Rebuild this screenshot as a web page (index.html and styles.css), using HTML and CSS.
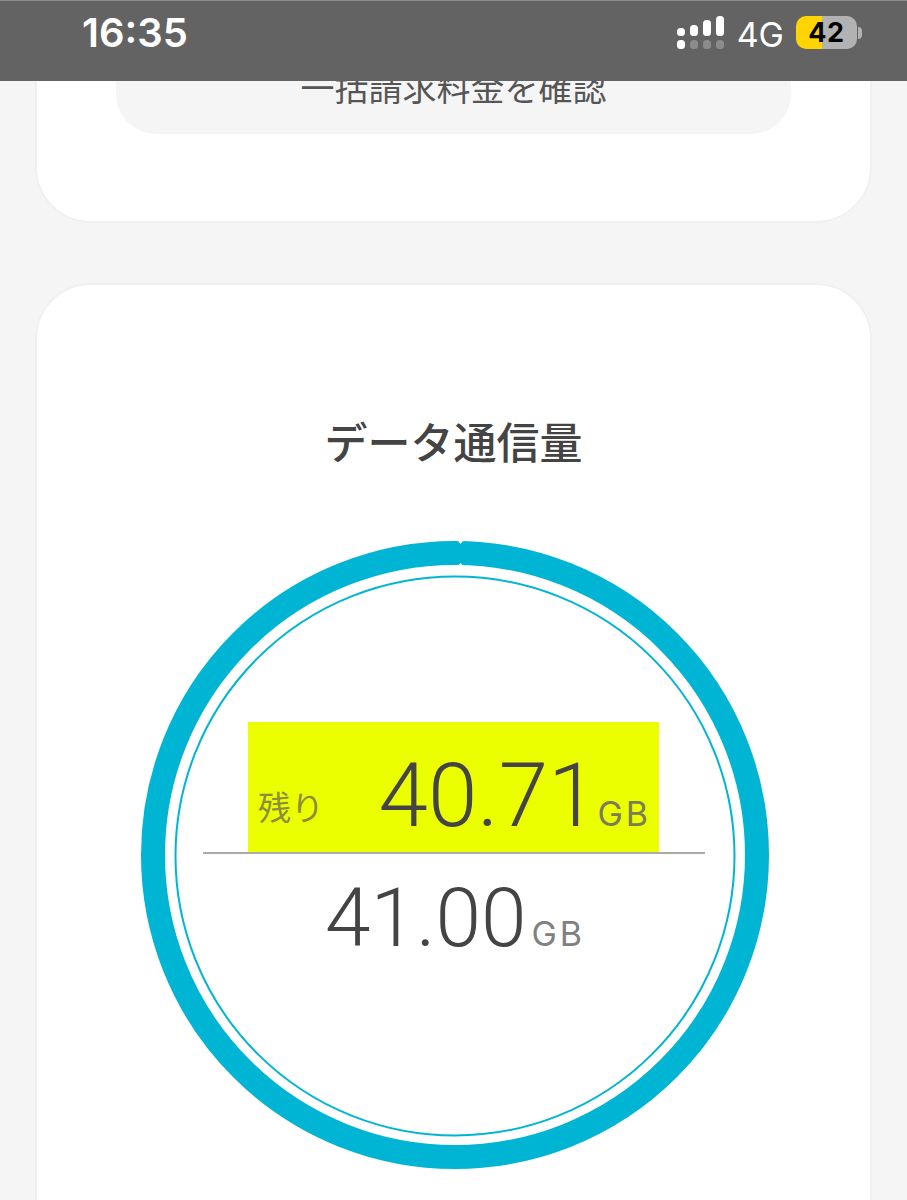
FILE: index.html
```html
<!DOCTYPE html>
<html lang="ja">
<head>
<meta charset="utf-8">
<title>データ通信量</title>
<link rel="stylesheet" href="styles.css">
</head>
<body>
<header class="status">
  <span class="time">16:35</span>
  <div class="status-right">
    <svg class="signal" width="47" height="33" viewBox="0 0 47 33">
      <g fill="#fff">
        <rect x="0" y="12" width="8" height="8" rx="3.5"/>
        <rect x="13" y="9" width="8" height="11" rx="3.5"/>
        <rect x="26" y="4" width="8" height="16" rx="3.5"/>
        <rect x="39" y="0" width="8" height="20" rx="3.5"/>
        <rect x="0" y="24" width="8" height="9" rx="3.5"/>
      </g>
      <g fill="#8c8c8c">
        <rect x="13" y="24" width="8" height="9" rx="3.5"/>
        <rect x="26" y="24" width="8" height="9" rx="3.5"/>
        <rect x="39" y="24" width="8" height="9" rx="3.5"/>
      </g>
    </svg>
    <span class="net">4G</span>
    <div class="battery"><span class="battery-level">42</span></div>
    <span class="battery-tip"></span>
  </div>
</header>
<main class="page">
  <section class="card card-top">
    <button class="bill-button">一括請求料金を確認</button>
  </section>
  <section class="card card-data">
    <h2 class="title">データ通信量</h2>
    <div class="gauge">
      <svg class="ring" width="630" height="630" viewBox="0 0 630 630">
        <circle cx="315" cy="315" r="302" fill="none" stroke="#00b5d3" stroke-width="24"/>
        <circle cx="315" cy="316" r="279.5" fill="none" stroke="#00b5d3" stroke-width="2"/>
        <path d="M317.5 0.5 L320.5 4 L323.5 0.5 Z" fill="#fff"/>
        <path d="M317.5 26 L320.5 23 L323.5 26 Z" fill="#fff"/>
      </svg>
      <div class="readout">
        <div class="remaining">
          <span class="remaining-label">残り</span>
          <span class="remaining-value"><span class="num-big">40.71</span><span class="unit">GB</span></span>
        </div>
        <div class="divider"></div>
        <div class="total"><span class="num-total">41.00</span><span class="unit unit-total">GB</span></div>
      </div>
    </div>
  </section>
</main>
</body>
</html>
```

FILE: styles.css
```css
* { box-sizing: border-box; }
html, body { margin: 0; height: 1200px; overflow: hidden; }
body {
  background: #f5f5f5;
  font-family: "Noto Sans CJK JP", sans-serif;
  color: #444;
}
.status {
  position: fixed;
  top: 0; left: 0; right: 0;
  height: 81px;
  background: #636363;
  border-top: 1px solid #8a8a8a;
  display: flex;
  align-items: center;
  justify-content: space-between;
  padding: 0 45px 0 82px;
  z-index: 2;
  color: #fff;
  font-family: Inter, sans-serif;
}
.time { font-size: 40px; font-weight: 600; margin-top: -17px; }
.status-right { display: flex; align-items: center; margin-top: -17px; }
.signal { display: block; margin-right: 13px; }
.net { font-size: 34px; font-weight: 400; margin-right: 12px; margin-top: 3px; }
.battery {
  width: 61px; height: 33px;
  border-radius: 10px;
  background: linear-gradient(to right, #ffd400 0 43%, #b2b2b2 43% 100%);
  display: flex; align-items: center; justify-content: center;
}
.battery-level { color: #000; font-size: 27px; font-weight: 700; letter-spacing: 0.5px; }
.battery-tip {
  width: 4px; height: 12px;
  background: #b2b2b2;
  border-radius: 0 4px 4px 0;
  margin-left: 1px;
}
.page { padding: 0 35px; }
.card {
  background: #fff;
  border: 2px solid #f0f0f0;
  border-radius: 56px;
}
.card-top {
  height: 223px;
  padding: 44px 79px 0;
  margin-bottom: 60px;
}
.bill-button {
  display: block;
  width: 100%;
  height: 88px;
  border: 0;
  border-radius: 40px;
  background: #f5f5f5;
  color: #555;
  font-family: inherit;
  font-size: 34px;
  padding: 0 0 8px;
}
.card-data { height: 1000px; padding: 123px 0 0 3px; }
.title {
  margin: 0 3px 0 0;
  text-align: center;
  font-size: 43px;
  font-weight: 500;
  line-height: 64px;
  color: #444;
}
.gauge {
  display: grid;
  width: 630px;
  height: 630px;
  margin: 68px auto 0;
}
.ring, .readout { grid-area: 1 / 1; }
.readout {
  display: flex;
  flex-direction: column;
  align-items: center;
  padding: 182px 3px 0 0;
}
.remaining {
  width: 411px;
  height: 130px;
  background: #ebff00;
  display: flex;
  justify-content: space-between;
  align-items: flex-start;
  padding: 0 11px 0 10px;
}
.remaining-label {
  font-size: 33px;
  line-height: 68px;
  margin-top: 50px;
  color: #8b8d3c;
}
.remaining-value { display: flex; align-items: baseline; gap: 0; }
.num-big {
  font-family: Roboto, sans-serif;
  font-size: 89px;
  font-weight: 300;
  line-height: 148px;
  color: #444;
}
.unit {
  font-family: Inter, sans-serif;
  font-size: 34px;
  font-weight: 400;
  color: #7b7d55;
  letter-spacing: 3px;
  margin-right: -3px;
}
.divider { width: 502px; height: 2px; background: #aaa; }
.total { display: flex; align-items: baseline; gap: 5px; margin-top: 16px; }
.num-total {
  font-family: Roboto, sans-serif;
  font-size: 82px;
  font-weight: 300;
  line-height: 96px;
  color: #444;
}
.unit-total { color: #808080; }
```
